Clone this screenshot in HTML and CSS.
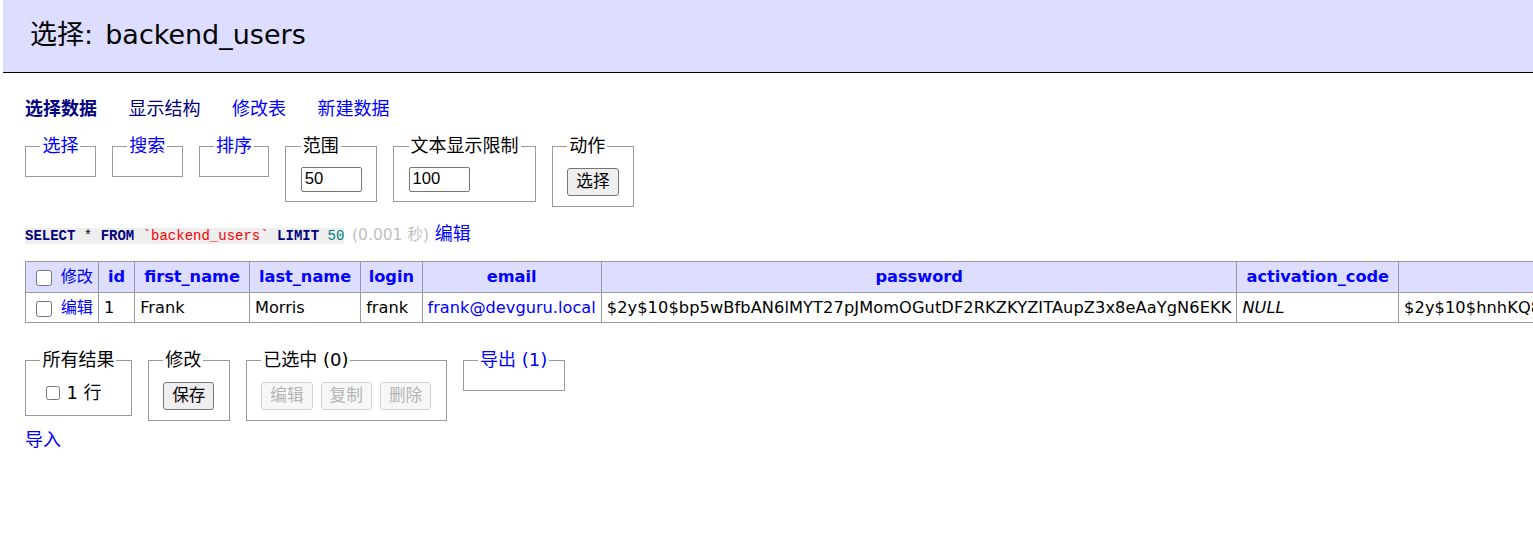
FILE: index.html
```html
<!DOCTYPE html>
<html lang="zh">
<head>
<meta charset="utf-8">
<title>选择: backend_users</title>
<link rel="stylesheet" href="styles.css">
</head>
<body>
<div class="content">
  <h2 class="title">选择<span class="colon">:</span> backend_users</h2>
  <p class="links"><a class="active navy">选择数据</a><a class="navy">显示结构</a><a>修改表</a><a>新建数据</a></p>
  <form class="select-form">
    <fieldset class="fs"><legend><a>选择</a></legend></fieldset>
    <fieldset class="fs"><legend><a>搜索</a></legend></fieldset>
    <fieldset class="fs"><legend><a>排序</a></legend></fieldset>
    <fieldset class="fs"><legend>范围</legend><input class="num" type="text" value="50"></fieldset>
    <fieldset class="fs"><legend>文本显示限制</legend><input class="num" type="text" value="100"></fieldset>
    <fieldset class="fs"><legend>动作</legend><button class="btn" type="button">选择</button></fieldset>
  </form>
  <p class="query"><code class="sql"><b>SELECT</b> * <b>FROM</b> <span class="bac">`backend_users`</span> <b>LIMIT</b> <span class="num-lit">50</span></code> <span class="time">(0.001 秒)</span> <a>编辑</a></p>
  <table class="data">
    <thead>
      <tr>
        <td><input class="cb" type="checkbox"> <a>修改</a></td>
        <th><a>id</a></th>
        <th><a>first_name</a></th>
        <th><a>last_name</a></th>
        <th class="narrow"><a>login</a></th>
        <th><a>email</a></th>
        <th><a>password</a></th>
        <th><a>activation_code</a></th>
        <th><a>persist_code</a></th>
        <th><a>reset_password_code</a></th>
        <th><a>permissions</a></th>
        <th><a>is_activated</a></th>
        <th><a>role_id</a></th>
      </tr>
    </thead>
    <tbody>
      <tr>
        <td><input class="cb" type="checkbox"> <a>编辑</a></td>
        <td>1</td>
        <td>Frank</td>
        <td>Morris</td>
        <td>frank</td>
        <td><a>frank@devguru.local</a></td>
        <td class="hash">$2y$10$bp5wBfbAN6lMYT27pJMomOGutDF2RKZKYZITAupZ3x8eAaYgN6EKK</td>
        <td><i>NULL</i></td>
        <td class="hash">$2y$10$hnhKQ8bNs3EPbaGzTEvPkOKC4dJ6cHvYk2pQ0uTf1LGhMxW9sRq2e</td>
        <td><i>NULL</i></td>
        <td><i>NULL</i></td>
        <td>1</td>
        <td>2</td>
      </tr>
    </tbody>
  </table>
  <div class="footer">
    <fieldset class="fs"><legend>所有结果</legend><label class="all"><input class="cb small" type="checkbox">1 行</label></fieldset>
    <fieldset class="fs"><legend>修改</legend><button class="btn" type="button">保存</button></fieldset>
    <fieldset class="fs"><legend>已选中 (0)</legend><div class="btns"><button class="btn" type="button" disabled>编辑</button><button class="btn" type="button" disabled>复制</button><button class="btn" type="button" disabled>删除</button></div></fieldset>
    <fieldset class="fs"><legend><a>导出 (1)</a></legend></fieldset>
  </div>
  <div class="import"><a>导入</a></div>
</div>
</body>
</html>
```
FILE: styles.css
```css
html, body {
  margin: 0;
  padding: 0;
}
body {
  font: 18px/22.5px "DejaVu Sans", "Noto Sans CJK SC", sans-serif;
  color: #000;
  background: #fff;
  overflow-x: hidden;
}
a {
  color: #0000ff;
  text-decoration: none;
}
a.navy {
  color: #000080;
}
.active {
  font-weight: bold;
}
.content {
  padding-left: 25px;
}
.title {
  font-size: 27px;
  font-weight: normal;
  line-height: 34px;
  margin: 0 0 25px -22px;
  padding: 18px 27px 20px;
  background: #ddf;
  border-bottom: 1px solid #000;
}
.title .colon {
  margin-right: 3.5px;
}
.links {
  margin: 0;
  display: flex;
  gap: 31.5px;
}
.select-form, .footer {
  display: flex;
  align-items: flex-start;
  gap: 16px;
}
.select-form {
  margin-top: 14.5px;
}
.fs {
  margin: 0;
  padding: 9px 14.4px;
  border: 1px solid #999;
  min-width: 0;
}
.fs legend {
  padding: 0 2px;
  line-height: 22.5px;
}
.num {
  display: block;
  box-sizing: border-box;
  width: 61px;
  height: 25px;
  margin: 0;
  padding: 0 3px;
  border: 1px solid #767676;
  border-radius: 2px;
  font: 16.67px "Liberation Sans", "Noto Sans CJK SC", sans-serif;
  color: #000;
  background: #fff;
}
.btn {
  display: block;
  box-sizing: border-box;
  height: 28px;
  margin: 1.5px 0 1px;
  padding: 0 8px;
  border: 1px solid #767676;
  border-radius: 3px;
  background: #efefef;
  color: #000;
  font: 16.67px/20px "Liberation Sans", "Noto Sans CJK SC", sans-serif;
}
.btn:disabled {
  background: #f7f7f7;
  border-color: #d0d0d0;
  color: #b4b4b4;
}
.query {
  margin: 15.5px 0 0;
}
.sql {
  font: 14px/16px "Liberation Mono", monospace;
  background: #eee;
}
.sql b {
  color: #000080;
  font-weight: bold;
}
.sql .bac {
  color: red;
}
.sql .num-lit {
  color: #007f7f;
}
.time {
  color: silver;
  font-size: 15.5px;
  margin-left: 2px;
}
.data {
  margin: 15px 0 0;
  border-collapse: collapse;
  font-size: 16.2px;
  white-space: nowrap;
}
.data td, .data th {
  border: 1px solid #999;
  padding: 4px 5px;
  line-height: 21px;
  text-align: left;
}
.data td.hash {
  letter-spacing: 0.1px;
}
.data thead td, .data thead th {
  background: #ddf;
  line-height: 22px;
}
.data thead th {
  text-align: center;
  padding: 4px 9px;
  font-weight: bold;
}
.data thead th.narrow {
  padding: 4px 7.5px;
}
.cb {
  width: 16px;
  height: 16px;
  margin: 0 3.5px 0 5px;
  vertical-align: middle;
}
.footer {
  margin-top: 26px;
  padding-bottom: 8px;
}
.all {
  display: flex;
  align-items: center;
  height: 25.5px;
}
.cb.small {
  width: 14px;
  height: 14px;
  margin: 0 6px 0 6px;
}
.btns {
  display: flex;
  gap: 8px;
}
.import {
  line-height: 22.5px;
}
```
